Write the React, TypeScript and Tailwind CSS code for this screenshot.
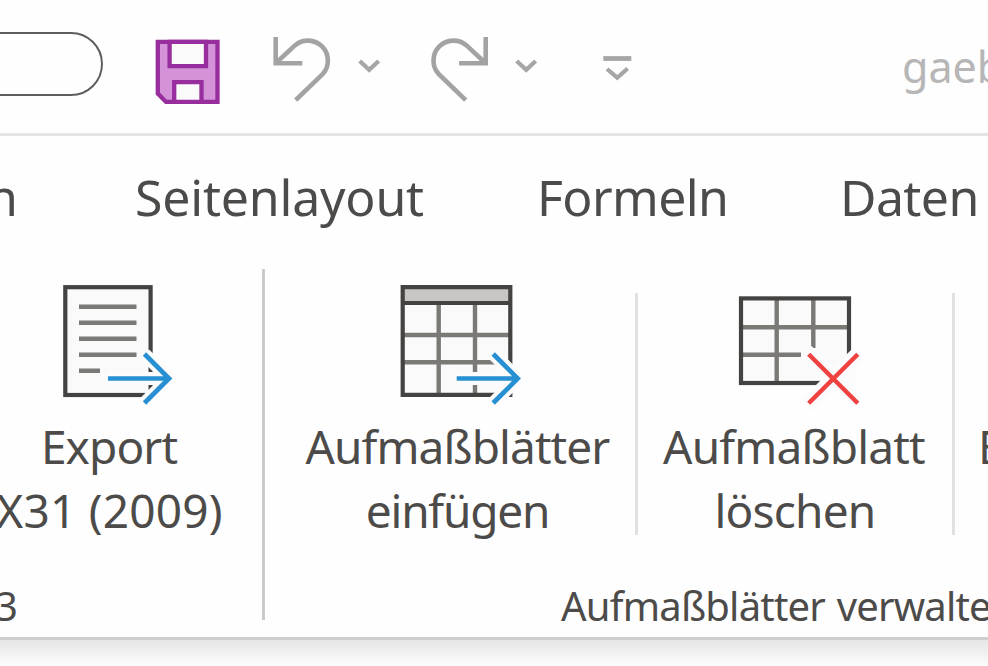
import React from "react";

type IconProps = {
  className?: string
}

// small down arrow next to undo / redo
function Caret({ className = "" }: IconProps) {
  return (
    <svg className={`h-4 w-6 shrink-0 ${className}`} viewBox="0 0 24 16" fill="none" stroke="#a6a6a6" strokeWidth="4.2">
      <path d="M1.7 3L11.2 11.8L20.7 3" />
    </svg>
  )
}

function SaveIcon({ className = "" }: IconProps) {
  return (
    <svg className={`h-[66px] w-[66px] shrink-0 ${className}`} viewBox="0 0 66 66">
      <path d="M2.8 2.8H62.5V62.9H11L2.8 54.5Z" fill="#d492d9" stroke="#982d9e" strokeWidth="4.3" />
      <path d="M14.6 2.8H51V27.2H14.6Z" fill="#fafafa" stroke="#982d9e" strokeWidth="4.3" />
      <path d="M19.2 62.9V43.2H46.5V62.9Z" fill="#fafafa" stroke="#982d9e" strokeWidth="4.3" />
    </svg>
  )
}

function UndoIcon({ className = "" }: IconProps) {
  return (
    <svg className={`h-[70px] w-[62px] shrink-0 ${className}`} viewBox="0 0 62 70" fill="none" stroke="#a3a3a3" strokeWidth="4.6">
      <path d="M5.7 5V31.3H32.3" />
      <path d="M6 31L24.9 13.4A20 20 0 0 1 53.1 41.6L25.7 68.2" />
    </svg>
  )
}

function RedoIcon({ className = "" }: IconProps) {
  return (
    <svg className={`h-[70px] w-[62px] shrink-0 ${className}`} viewBox="0 0 62 70" fill="none" stroke="#a3a3a3" strokeWidth="4.6">
      <path d="M57.7 5V31.3H31.1" />
      <path d="M57.4 31L38.5 13.4A20 20 0 0 0 10.3 41.6L37.7 68.2" />
    </svg>
  )
}

// blue arrow that sits over the export and insert icons
function BlueArrow({ x }: { x: number }) {
  return (
    <g transform={`translate(${x} 0)`} fill="none">
      <path d="M0 98.5H60M36.5 74L61 98.5L36.5 123" stroke="#fcfcfc" strokeWidth="13" />
      <path d="M0 98.5H60M36.5 74L61 98.5L36.5 123" stroke="#2790d3" strokeWidth="4.7" />
    </g>
  )
}

function ExportIcon() {
  return (
    <svg className="h-[134px] w-[116px]" viewBox="0 0 116 134">
      <rect x="5.3" y="7.2" width="85.3" height="107.8" fill="#fafafa" stroke="#444341" strokeWidth="4.2" />
      <path d="M19 26.7H76.5M19 42.7H76.5M19 58.7H76.5M19 74.7H76.5M19 90.7H40" stroke="#7b7975" strokeWidth="4.6" />
      <BlueArrow x={48} />
    </svg>
  )
}

function InsertSheetIcon() {
  return (
    <svg className="h-[134px] w-[124px]" viewBox="0 0 124 134">
      <rect x="5.7" y="7.2" width="107.6" height="107.6" fill="#fafafa" />
      <rect x="5.7" y="7.2" width="107.6" height="16" fill="#c8c6c4" />
      <path d="M5.7 55H113.3M5.7 82.3H113.3M41.7 23V115M78 23V115" stroke="#7b7975" strokeWidth="4.4" />
      <path d="M5.7 7.2H113.3V114.8H5.7ZM5.7 23H113.3" fill="none" stroke="#444341" strokeWidth="4.2" />
      <BlueArrow x={59.7} />
    </svg>
  )
}

function DeleteSheetIcon() {
  return (
    <svg className="h-[134px] w-[126px]" viewBox="0 0 126 134">
      <rect x="6" y="18.4" width="108" height="84.6" fill="#fafafa" />
      {/* grid lines stop short of the red cross */}
      <path d="M6 47.3H114M6 74.7H66M41.7 18.4V103M78.3 18.4V68" stroke="#7b7975" strokeWidth="4.4" />
      <rect x="6" y="18.4" width="108" height="84.6" fill="none" stroke="#444341" strokeWidth="4.2" />
      <path d="M71 71.5L123.5 124M71 126L125 72" stroke="#fcfcfc" strokeWidth="15.5" />
      <path d="M98 98L120 76V120Z" fill="#fcfcfc" />
      <path d="M73.7 74.2L122.8 123.3M73.7 123.3L122.8 74.2" stroke="#f04141" strokeWidth="4.4" />
    </svg>
  )
}

type RibbonButtonProps = {
  icon: React.ReactNode
  first: string
  second: string
  className: string
  secondClassName?: string
}

// large ribbon button, icon on top and two lines of text
function RibbonButton({ icon, first, second, className, secondClassName = "" }: RibbonButtonProps) {
  return (
    <button className={`flex shrink-0 flex-col items-center whitespace-nowrap text-[46px] leading-[64px] ${className}`}>
      {icon}
      <span>{first}</span>
      <span className={secondClassName}>{second}</span>
    </button>
  )
}

export default function App() {
  return (
    <div className="flex h-[666px] w-[988px] flex-col overflow-hidden bg-[#fefefe] font-['Noto_Sans',sans-serif] text-[#4c4b49]">

      {/* quick access bar */}
      <header className="flex h-[136px] shrink-0 items-start overflow-hidden border-b-[3px] border-[#e4e4e2]">
        <div className="mt-8 -ml-10 h-16 w-[142.5px] shrink-0 rounded-full border-2 border-[#5e5e5e]" />
        <SaveIcon className="mt-[39px] ml-[52px]" />
        <UndoIcon className="mt-8 ml-[49.5px]" />
        <Caret className="mt-[58px] ml-[26px]" />
        <RedoIcon className="mt-8 ml-[46px]" />
        <Caret className="mt-[58px] ml-[25px]" />
        <svg className="mt-[54px] ml-[62px] h-7 w-8 shrink-0" viewBox="0 0 32 28" fill="none" stroke="#a6a6a6">
          <path d="M2.3 4.5H30.3" strokeWidth="4.8" />
          <path d="M6 15L16.3 23.7L26.6 14.5" strokeWidth="4.2" />
        </svg>
        <span className="mt-[37px] ml-[269px] shrink-0 text-[43px] leading-[60px] text-[#b6b6b6]">gaeb</span>
      </header>

      {/* ribbon tabs */}
      <nav className="flex h-[119px] shrink-0 overflow-hidden pt-0.5 text-[50px] leading-[119px]">
        <span className="flex w-[18px] shrink-0 justify-end">n</span>
        <span className="ml-[117px] w-[290px] shrink-0 tracking-[-0.2px]">Seitenlayout</span>
        <span className="ml-[112px] w-[190px] shrink-0 tracking-[-0.6px]">Formeln</span>
        <span className="ml-[113px] shrink-0 tracking-[-0.6px]">Daten</span>
      </nav>

      {/* ribbon body */}
      <main className="flex h-[382px] shrink-0 overflow-hidden">
        <section className="flex w-[262px] shrink-0 flex-col pt-[25px]">
          <RibbonButton
            className="-ml-[11px] w-[240px] tracking-[-0.9px]"
            icon={<div className="ml-[17px]"><ExportIcon /></div>}
            first="Export"
            second="X31 (2009)"
            secondClassName="ml-px tracking-[0.2px]"
          />
          <span className="mt-[34px] flex w-[18px] justify-end text-[40px] leading-[60px]">3</span>
        </section>
        <div className="mt-3.5 h-[351px] w-[3px] shrink-0 bg-[#cacac9]" />

        <section className="flex w-[723px] shrink-0 flex-col">
          <div className="flex pt-[25px]">
            <RibbonButton
              className="w-[370px] pl-[15px] tracking-[-0.9px]"
              icon={<div className="ml-[3px]"><InsertSheetIcon /></div>}
              first="Aufmaßblätter"
              second="einfügen"
              secondClassName="tracking-[-1.2px]"
            />
            <div className="mt-[13px] h-[242px] w-[3px] shrink-0 bg-[#e1e1e1]" />
            <RibbonButton
              className="w-[312px] tracking-[-0.8px]"
              icon={<div className="ml-[7px]"><DeleteSheetIcon /></div>}
              first="Aufmaßblatt"
              second="löschen"
              secondClassName="ml-0.5"
            />
            <div className="mt-[13px] ml-0.5 h-[242px] w-[3px] shrink-0 bg-[#e1e1e1]" />
            <div className="ml-[23px] w-[10px] overflow-hidden pt-[134px] text-[46px] leading-[64px]">E</div>
          </div>
          <span className="mt-[34px] ml-[296px] text-[40px] leading-[60px] tracking-[-0.8px] [word-spacing:2px] whitespace-nowrap">
            Aufmaßblätter verwalten
          </span>
        </section>
      </main>

      {/* ribbon edge with its shadow */}
      <footer className="flex-1 border-t-[3px] border-[#cfcecd] bg-linear-to-b from-[#e5e5e5] to-[#fdfdfd]" />
    </div>
  )
}
